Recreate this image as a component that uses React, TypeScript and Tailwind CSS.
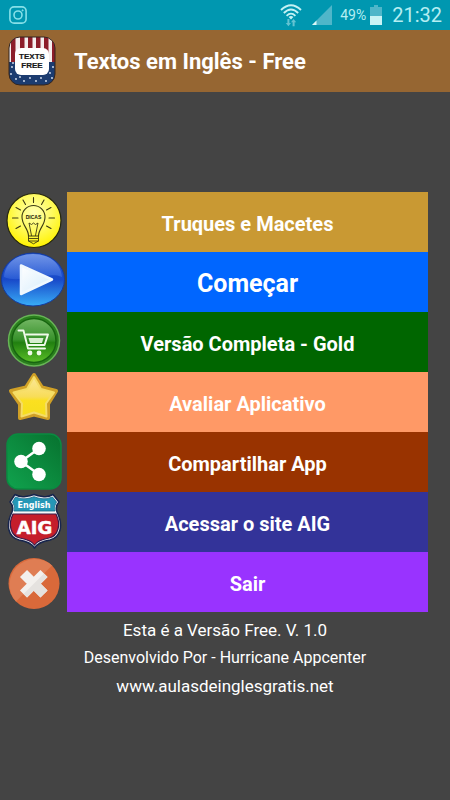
import type { ReactNode } from "react";

function InstagramIcon() {
  return (
    <svg viewBox="0 0 18 18" className="h-[18px] w-[18px]" fill="none" stroke="#86e0e8" strokeWidth="1.6" aria-hidden="true">
      <rect x="0.9" y="0.9" width="16.2" height="16.2" rx="4.2" />
      <circle cx="9" cy="9" r="4" />
      <circle cx="13.6" cy="4.4" r="0.6" fill="#86e0e8" strokeWidth="0.8" />
    </svg>
  );
}

function WifiIcon() {
  return (
    <svg viewBox="0 0 22 23" className="h-[23px] w-[22px]" fill="none" aria-hidden="true">
      <g stroke="#c4f2f4" strokeWidth="1.8">
        <path d="M1 6Q11 -3.6 21 6" />
        <path d="M3.8 9Q11 2 18.2 9" />
        <path d="M6.6 11.8Q11 7.4 15.4 11.8" />
      </g>
      <path d="M8.6 13Q11 11 13.4 13L11 15.4Z" fill="#c4f2f4" />
      <path d="M7.400 15h2v4h1.600l-2.600 3.200L5.800 19h1.600zM12.600 22.200h2v-4h1.600L13.600 15 11 18.200h1.600z" fill="#63c3d2" />
    </svg>
  );
}

function SignalIcon() {
  return (
    <svg viewBox="0 0 20 20" className="h-5 w-5" aria-hidden="true">
      <path d="M20 0V20H0Z" fill="#4fb6c9" />
      <path d="M4.500 15.500V20H0Z" fill="#d8f8f8" />
    </svg>
  );
}

function BatteryIcon() {
  return (
    <svg viewBox="0 0 12 20" className="h-5 w-3" aria-hidden="true">
      <path d="M4 0H8V2H12V11H0V2H4Z" fill="#4fb6c9" />
      <rect y="11" width="12" height="9" fill="#c9f3f5" />
    </svg>
  );
}

function AppLogo() {
  const stars = [[4, 31], [3, 38], [8, 43], [12, 41], [16, 45], [22, 42], [28, 45], [33, 42], [38, 45], [42, 37], [45, 31], [44, 42], [5, 27]];
  return (
    <svg viewBox="0 0 48 50" className="h-[50px] w-12 shrink-0" role="img" aria-label="Texts Free">
      <defs>
        <clipPath id="logo-clip"><rect x="1" y="1" width="46" height="48" rx="11" /></clipPath>
      </defs>
      <g clipPath="url(#logo-clip)">
        <rect width="48" height="27" fill="#f4eeee" />
        {[3, 12, 20, 28, 36, 44].map((x) => <rect key={x} x={x} width="4.500" height="27" fill="#8c1d2a" />)}
        <rect y="26" width="48" height="24" fill="#1c3c70" />
        {stars.map(([x, y]) => <circle key={`${x}-${y}`} cx={x} cy={y} r="0.9" fill="#dfe8f5" />)}
      </g>
      <rect x="1" y="1" width="46" height="48" rx="11" fill="none" stroke="#33251f" strokeWidth="1" />
      <rect x="7" y="12" width="34" height="27" rx="6" fill="#fff" />
      <g fontFamily="'Liberation Sans', Arial, sans-serif" fontWeight="700" fontSize="8" textAnchor="middle" fill="#161616" stroke="#161616" strokeWidth="0.2">
        <text x="24" y="23">TEXTS</text>
        <text x="24" y="32">FREE</text>
      </g>
    </svg>
  );
}

function RowIcon({ children }: { children: ReactNode }) {
  return (
    <svg viewBox="0 0 67 60" className="h-[60px] w-[67px] shrink-0 overflow-visible" aria-hidden="true">
      {children}
    </svg>
  );
}

function BulbIcon() {
  return (
    <RowIcon>
      <defs>
        <radialGradient id="bulb" cx="0.5" cy="0.35" r="0.65">
          <stop offset="0" stopColor="#ffffb0" />
          <stop offset="0.5" stopColor="#fffb62" />
          <stop offset="1" stopColor="#fff200" />
        </radialGradient>
      </defs>
      <circle cx="34" cy="28.500" r="27" fill="url(#bulb)" stroke="#28280e" strokeWidth="1.200" />
      <g fill="none" stroke="#3d3b12" strokeWidth="1.100" strokeLinecap="round">
        <path d="M28.500 44C28.500 36.500 22 33.500 22 25A11.500 11.500 0 0 1 45 25C45 33.500 38.500 36.500 38.500 44Z" />
        <path d="M28.500 46.500h10M28.500 49l5 2.800 5-2.800M28.500 44v5h10v-5M31.500 43.500L29 31l2.500 1.500 2-1.500 2 1.500 2.500-1.500-2.500 12.500" strokeWidth="0.9" />
        <path d="M33.500 5.500v5M23 8l2.500 4.500M44 8l-2.500 4.500M16 15.500l4.500 2.500M51 15.500L46.500 18M12.500 26h5.500M49 26h5.500M16 36.500l4.500-2.500M51 36.500L46.500 34" />
      </g>
      <text x="33.500" y="26.500" fontFamily="'Liberation Sans', Arial, sans-serif" fontSize="5" fontWeight="700" textAnchor="middle" fill="#171704">DICAS</text>
    </RowIcon>
  );
}

function PlayIcon() {
  return (
    <RowIcon>
      <defs>
        <linearGradient id="play" x2="0" y2="1">
          <stop offset="0" stopColor="#2858cf" />
          <stop offset="0.5" stopColor="#1849c9" />
          <stop offset="1" stopColor="#39aef7" />
        </linearGradient>
        <linearGradient id="play-gloss" x2="0" y2="1">
          <stop offset="0" stopColor="#8baaf0" />
          <stop offset="1" stopColor="#2d60d8" />
        </linearGradient>
        <linearGradient id="play-arrow" x2="1" y2="1">
          <stop offset="0" stopColor="#fff" />
          <stop offset="1" stopColor="#d3ebfb" />
        </linearGradient>
      </defs>
      <ellipse cx="33" cy="27.500" rx="31.500" ry="26.500" fill="url(#play)" stroke="#123aa0" strokeWidth="1" />
      <path d="M4 25C5 11 17 2 33 2S61 11 62 25C48 19 20 32 4 25Z" fill="url(#play-gloss)" opacity="0.75" />
      <path d="M21 13.500L52 27.500 21 42Z" fill="url(#play-arrow)" stroke="#f0f8fe" strokeWidth="2.500" strokeLinejoin="round" />
    </RowIcon>
  );
}

function CartIcon() {
  return (
    <RowIcon>
      <defs>
        <linearGradient id="cart" x2="0" y2="1">
          <stop offset="0" stopColor="#74b765" />
          <stop offset="0.48" stopColor="#38922b" />
          <stop offset="0.55" stopColor="#218010" />
          <stop offset="1" stopColor="#5bc027" />
        </linearGradient>
      </defs>
      <circle cx="34" cy="28.500" r="25.500" fill="#2b7f1e" stroke="#67b556" strokeWidth="1.500" />
      <circle cx="34" cy="28.500" r="22" fill="url(#cart)" stroke="#176510" strokeWidth="1.500" />
      <g fill="none" stroke="#f0faea" strokeWidth="1.900" strokeLinejoin="round" strokeLinecap="round">
        <path d="M18.500 18.500h5L28 36.500h17" />
        <path d="M26 22.500H48L44.500 33H28" />
      </g>
      <path d="M28.500 26h15l-1.500 5H30Z" fill="#d7edcf" />
      <circle cx="30" cy="41" r="2.400" fill="#f0faea" />
      <circle cx="39" cy="41" r="2.400" fill="#f0faea" />
    </RowIcon>
  );
}

function StarIcon() {
  return (
    <RowIcon>
      <defs>
        <linearGradient id="star" x2="0" y2="1">
          <stop offset="0" stopColor="#fbe89a" />
          <stop offset="0.5" stopColor="#f8dc58" />
          <stop offset="0.6" stopColor="#fbe020" />
          <stop offset="1" stopColor="#f5de1e" />
        </linearGradient>
      </defs>
      <path d="M34 3L42 15.500 56 19 48 32 48 46 34 42.500 20 46 20 32 11 19 26 15.500Z" fill="#d9ae24" stroke="#d0a026" strokeWidth="4" strokeLinejoin="round" />
      <path d="M34 5L41 17 54 20.500 46 31.500 46.500 44.500 34 40.500 21.500 44.500 22 31.500 13.500 20.500 27 17Z" fill="url(#star)" stroke="#f5dd66" strokeWidth="2" strokeLinejoin="round" />
    </RowIcon>
  );
}

function ShareIcon() {
  return (
    <RowIcon>
      <defs>
        <linearGradient id="share" x1="1" x2="0" y2="1">
          <stop offset="0" stopColor="#07722f" />
          <stop offset="1" stopColor="#10a34e" />
        </linearGradient>
      </defs>
      <rect x="7" y="2" width="54" height="55" rx="11" fill="url(#share)" stroke="#0a8b40" strokeWidth="1.500" />
      <path d="M39 16.500L21 29.500 39 42.500" fill="none" stroke="#fff" strokeWidth="2.500" />
      <circle cx="39" cy="16.500" r="6.800" fill="#fff" />
      <circle cx="21" cy="29.500" r="6.800" fill="#fff" />
      <circle cx="39" cy="42.500" r="6.800" fill="#fff" />
    </RowIcon>
  );
}

function ShieldIcon() {
  return (
    <RowIcon>
      <path d="M15 2.500Q20 5.500 25.500 4.500 30 4 34 2.500 38 4 42.500 4.500 48 5.500 53 2.500L59 10Q55 14 57 20 62 30 60 38 58 46 50 48 38 50 34.500 56 31 50 19 48 11 46 9 38 7 30 12 20 14 14 10 10Z" fill="#f7f8fa" stroke="#17254d" strokeWidth="1.500" strokeLinejoin="round" />
      <path d="M15.500 5Q21 7.500 26 6.700 30 6.300 34 4.700 38 6.300 42 6.700 47 7.500 52.500 5L56.500 10Q53.500 14 55 19H14Q15.500 14 12.500 10Z" fill="#2597b6" stroke="#176a88" strokeWidth="0.800" />
      <path d="M13 22H56Q60 30 58 37 56 44.500 49 46 38 48 34.500 53 31 48 20 46 13 44.500 11 37 9 30 13 22Z" fill="#c51e2b" stroke="#3c1a48" strokeWidth="1.200" />
      <g textAnchor="middle" fill="#fff" fontWeight="700">
        <text x="34" y="16" fontFamily="'DejaVu Sans', sans-serif" fontSize="8">English</text>
        <text x="34.500" y="42" fontFamily="'DejaVu Sans', sans-serif" fontSize="18" stroke="#fff" strokeWidth="0.5">AIG</text>
      </g>
    </RowIcon>
  );
}

function CloseIcon() {
  return (
    <RowIcon>
      <defs>
        <clipPath id="close-shade"><path d="M52 13.500V49.500H16Z" /></clipPath>
      </defs>
      <circle cx="34" cy="31.500" r="25.500" fill="#d9693a" />
      <path d="M16 49.500A25.500 25.500 0 0 1 52 13.500Z" fill="#df7d53" />
      <path d="M23.500 21.500L44 42M44 21.500L23.500 42" stroke="#f3f0ed" strokeWidth="10" />
      <path d="M23.500 21.500L44 42M44 21.500L23.500 42" stroke="#e5e2df" strokeWidth="10" clipPath="url(#close-shade)" />
    </RowIcon>
  );
}

const items = [
  { label: "Truques e Macetes", icon: <BulbIcon />, style: "bg-[#c99933] text-xl" },
  { label: "Começar", icon: <PlayIcon />, style: "bg-[#0066ff] text-[25px]" },
  { label: "Versão Completa - Gold", icon: <CartIcon />, style: "bg-[#006600] text-xl" },
  { label: "Avaliar Aplicativo", icon: <StarIcon />, style: "bg-[#ff9966] text-xl" },
  { label: "Compartilhar App", icon: <ShareIcon />, style: "bg-[#993300] text-xl" },
  { label: "Acessar o site AIG", icon: <ShieldIcon />, style: "bg-[#333399] text-xl" },
  { label: "Sair", icon: <CloseIcon />, style: "bg-[#9933ff] text-xl" },
];

export default function App() {
  return (
    <div className="flex min-h-screen flex-col bg-[#444444] font-[Roboto,sans-serif] text-white">
      <div className="flex h-[30px] items-center bg-[#0097b0] pl-[9px] pr-2 text-[#b5eef2]">
        <InstagramIcon />
        <div className="ml-auto flex items-center">
          <WifiIcon />
          <span className="ml-2.5"><SignalIcon /></span>
          <span className="ml-2 text-sm">49%</span>
          <span className="ml-1"><BatteryIcon /></span>
          <span className="ml-2.5 text-xl">21:32</span>
        </div>
      </div>
      <header className="flex h-[62px] items-center gap-[18px] bg-[#966632] px-2">
        <AppLogo />
        <h1 className="text-[22px] font-bold">Textos em Inglês - Free</h1>
      </header>
      <main className="pt-[100px]">
        <nav>
          {items.map(({ label, icon, style }) => (
            <div key={label} className="flex pr-[22px]">
              {icon}
              <button type="button" className={`h-[60px] flex-1 pt-[3px] font-bold ${style}`}>{label}</button>
            </div>
          ))}
        </nav>
        <footer className="pt-1 text-center leading-7">
          <p className="text-[17px]">Esta é a Versão Free. V. 1.0</p>
          <p className="text-[16px]">Desenvolvido Por - Hurricane Appcenter</p>
          <a href="http://www.aulasdeinglesgratis.net" className="text-[17px]">www.aulasdeinglesgratis.net</a>
        </footer>
      </main>
    </div>
  );
}
